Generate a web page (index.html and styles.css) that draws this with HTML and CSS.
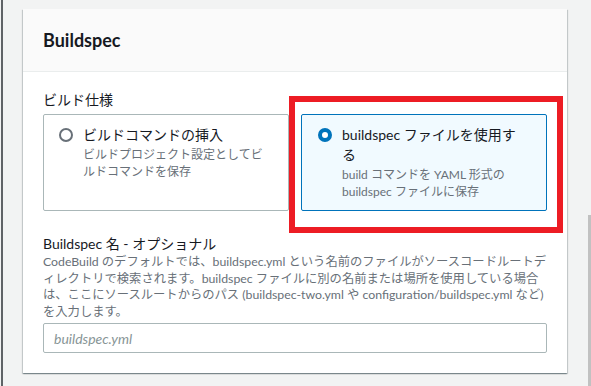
FILE: index.html
```html
<!DOCTYPE html>
<html lang="ja">
<head>
  <meta charset="UTF-8">
  <meta name="viewport" content="width=device-width, initial-scale=1.0">
  <title>Buildspec</title>
  <link rel="stylesheet" href="styles.css">
</head>
<body>
  <div class="page">
    <div class="card">
      <div class="card-header">
        <h2>Buildspec</h2>
      </div>

      <div class="card-body">
        <!-- ビルド仕様の選択 -->
        <div class="field-label">ビルド仕様</div>
        <div class="tiles">
          <label class="tile">
            <span class="radio"></span>
            <span class="tile-text">
              <span class="tile-title">ビルドコマンドの挿入</span>
              <span class="tile-desc">ビルドプロジェクト設定としてビルドコマンドを保存</span>
            </span>
          </label>
          <label class="tile checked">
            <span class="radio"></span>
            <span class="tile-text">
              <span class="tile-title">buildspec ファイルを使用する</span>
              <span class="tile-desc">build コマンドを YAML 形式の buildspec ファイルに保存</span>
            </span>
            <span class="highlight"></span>
          </label>
        </div>

        <!-- Buildspec 名 -->
        <label class="field-label spaced" for="buildspec-name">Buildspec 名 - オプショナル</label>
        <p class="field-desc">CodeBuild のデフォルトでは、buildspec.yml という名前のファイルがソースコードルートディレクトリで検索されます。buildspec ファイルに別の名前または場所を使用している場合は、ここにソースルートからのパス (buildspec-two.yml や configuration/buildspec.yml など) を入力します。</p>
        <input type="text" id="buildspec-name" placeholder="buildspec.yml">
      </div>
    </div>
  </div>
  <div class="scroll-thumb"></div>
</body>
</html>
```

FILE: styles.css
```css
body {
  font-family: Lato, "Noto Sans CJK JP", sans-serif;
  margin: 0;
  padding: 0;
  background-color: #f2f3f3;
  color: #16191f;
  height: 386px;
  overflow: hidden;
}
.page {
  margin-left: 1px;
  border-left: 2px solid #5f6366;
  padding: 9px 24px 0 20px;
  height: 386px;
  box-sizing: border-box;
}
.card {
  background: #fff;
  box-shadow: 0 1px 1px 0 rgba(0, 28, 36, 0.3), 1px 1px 1px 0 rgba(0, 28, 36, 0.15), -1px 1px 1px 0 rgba(0, 28, 36, 0.15);
}
.card-header {
  background: #fafafa;
  border-bottom: 1px solid #eaeded;
  padding: 19px 20px;
}
.card-header h2 {
  margin: 0;
  font-size: 18px;
  line-height: 24px;
  font-weight: 700;
}
.card-body {
  padding: 18px 20px 20px;
}
.field-label {
  display: block;
  font-size: 14px;
  line-height: 20px;
  margin-bottom: 4px;
}
.field-label.spaced {
  margin-top: 23px;
  margin-bottom: 0;
}
.tiles {
  display: grid;
  grid-template-columns: 1fr 1fr;
  gap: 12px;
}
.tile {
  position: relative;
  display: flex;
  gap: 10px;
  height: 97px;
  box-sizing: border-box;
  padding: 10px 20px 10px 15px;
  border: 1px solid #aab7b8;
  border-radius: 2px;
}
.tile.checked {
  background: #f1faff;
  border-color: #0073bb;
  padding-left: 16px;
}
.radio {
  flex: none;
  width: 14px;
  height: 14px;
  margin-top: 3px;
  border: 2px solid #687078;
  border-radius: 50%;
  box-sizing: border-box;
  background: #fff;
}
.tile.checked .radio {
  border: 4px solid #0073bb;
}
.tile-text {
  display: flex;
  flex-direction: column;
}
.tile-title {
  font-size: 14px;
  line-height: 20px;
}
.tile-desc {
  font-size: 12px;
  line-height: 17px;
  color: #687078;
  margin-top: 1px;
}
.highlight {
  position: absolute;
  left: -13px;
  top: -19px;
  right: -17px;
  bottom: -23px;
  border: 6px solid #ed1c24;
  pointer-events: none;
}
.field-desc {
  margin: 0 0 3px;
  font-size: 12.3px;
  line-height: 16.5px;
  line-break: loose;
  color: #687078;
}
input {
  display: block;
  width: 100%;
  height: 30px;
  box-sizing: border-box;
  padding: 0 10px;
  font-family: inherit;
  font-size: 14px;
  border: 1px solid #aab7b8;
  border-radius: 2px;
  background: #fff;
}
input::placeholder {
  color: #879596;
  font-style: italic;
}
.scroll-thumb {
  position: absolute;
  right: 0;
  top: 215px;
  width: 3px;
  height: 171px;
  background: #c1c1c1;
}
```
